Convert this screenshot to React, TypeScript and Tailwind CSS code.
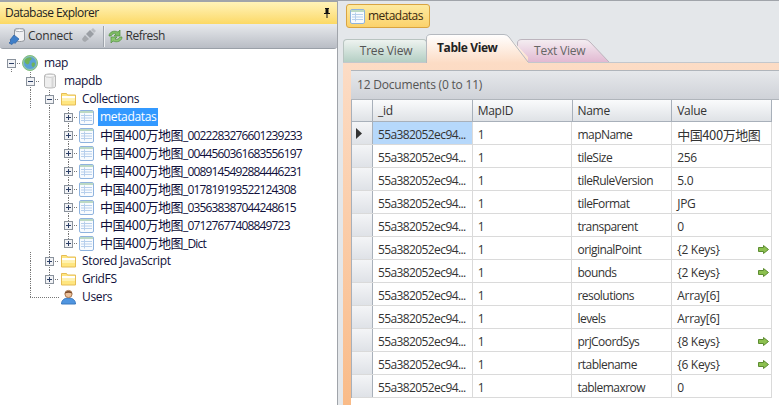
import React from 'react';

const cjk = "font-['Noto_Sans_CJK_SC',sans-serif] text-[13px] tracking-[-0.45px]";

function Guide({ up, down, right, box }: { up?: boolean; down?: boolean; right?: boolean; box?: 'plus' | 'minus' }) {
  return (
    <svg width="19" height="18" className="shrink-0 block">
      {up && <line x1="9.5" y1="0" x2="9.5" y2="9" stroke="#777" strokeDasharray="1 1" />}
      {down && <line x1="9.5" y1="9" x2="9.5" y2="18" stroke="#777" strokeDasharray="1 1" />}
      {right && <line x1="9" y1="9.5" x2="19" y2="9.5" stroke="#777" strokeDasharray="1 1" />}
      {box && (
        <>
          <rect x="5.5" y="5.5" width="8" height="8" fill="#f1f2f5" stroke="#8a929c" />
          <line x1="7" y1="9.5" x2="12" y2="9.5" stroke="#2c3f66" />
          {box === 'plus' && <line x1="9.5" y1="7" x2="9.5" y2="12" stroke="#2c3f66" />}
        </>
      )}
    </svg>
  );
}

function TableIcon() {
  return (
    <svg width="15" height="15" viewBox="0 0 15 15" className="shrink-0">
      <rect x="0.5" y="0.5" width="14" height="14" rx="1.5" fill="#f8fbfe" stroke="#8fb3de" />
      <rect x="1" y="1" width="13" height="2" fill="#bcd9c4" />
      <path d="M2 5.5h11M2 8h11M2 10.5h11M5.5 3.5v9" stroke="#b7cfec" />
    </svg>
  );
}

function FolderIcon() {
  return (
    <svg width="15" height="14" viewBox="0 0 15 14" className="shrink-0">
      <path d="M0.5 13V1.5h5l1 1.5h8v10z" fill="#ffe680" stroke="#e6bd55" />
      <path d="M1 4h13v2.5H1z" fill="#ffffff" />
      <path d="M1 6.5h13V9H1z" fill="#fff2b0" />
    </svg>
  );
}

function GlobeIcon() {
  return (
    <svg width="16" height="16" viewBox="0 0 16 16" className="shrink-0">
      <circle cx="8" cy="8" r="7.5" fill="#5aa0d6" stroke="#86c077" />
      <path d="M2.5 5c2-3 6-3.5 7-2 1 2-2 2-2 4s-2 3-3 2-2.5-2-2-4zM10 8c2-1 3 0 3 1s-1 3-2 3-2-3-1-4z" fill="#6fb35a" />
      <circle cx="8" cy="8" r="6.5" fill="none" stroke="#a9d69b" strokeOpacity="0.7" />
    </svg>
  );
}

function DbIcon() {
  return (
    <svg width="12" height="16" viewBox="0 0 12 16" className="shrink-0">
      <path d="M0.5 2.5C0.5 0.5 11.5 0.5 11.5 2.5V13.5C11.5 15.5 0.5 15.5 0.5 13.5z" fill="#eeeeee" stroke="#b8b8b8" />
      <ellipse cx="6" cy="2.8" rx="5" ry="1.5" fill="#fafafa" stroke="#c8c8c8" />
      <path d="M8.5 5v9" stroke="#d6d6d6" strokeWidth="2" />
    </svg>
  );
}

function UserIcon() {
  return (
    <svg width="15" height="16" viewBox="0 0 15 16" className="shrink-0">
      <path d="M0.5 15c0-4 3-6 7-6s7 2 7 6z" fill="#4f95e0" stroke="#3a78bf" />
      <circle cx="7.5" cy="5" r="3.6" fill="#eec29c" stroke="#a7764f" />
      <path d="M3.8 4.5C4 1 11 1 11.2 4.5 9 3.5 6 3.5 3.8 4.5z" fill="#7a4a28" />
    </svg>
  );
}

function ConnectIcon() {
  return (
    <svg width="18" height="18" viewBox="0 0 18 18" className="shrink-0">
      <path d="M6.5 3C6.5 1 16.5 1 16.5 3V13C16.5 15 6.5 15 6.5 13z" fill="#f0f0f2" stroke="#8f949b" />
      <ellipse cx="11.5" cy="3.2" rx="4.6" ry="1.4" fill="#fff" stroke="#a5a9b0" />
      <path d="M1 16l2-2-1-1 4-5 5 4-4 4.5-1-1-2 2z" fill="#3f7fc9" stroke="#2b5f9f" strokeWidth="0.7" />
    </svg>
  );
}

function PlugIcon() {
  return (
    <svg width="17" height="17" viewBox="0 0 17 17" className="shrink-0">
      <path d="M1 16l3-3-1-2 3-4 4 4-4 3-2-1-3 3z" fill="#a5a8ad" />
      <path d="M7 6l4-4 4 4-4 4z" fill="#9a9ea4" />
      <path d="M12 2l2-2 3 3-2 2z" fill="#b9bcc1" />
    </svg>
  );
}

function RefreshIcon() {
  return (
    <svg width="17" height="17" viewBox="0 0 17 17" className="shrink-0">
      <path d="M2 8c0-4 5-6 9-4l2-2v6H7l2-2c-2-1-4 0-5 2z" fill="#7dbb63" stroke="#4f8f3d" strokeWidth="0.7" />
      <path d="M15 9c0 4-5 6-9 4l-2 2V9h6l-2 2c2 1 4 0 5-2z" fill="#8cc671" stroke="#4f8f3d" strokeWidth="0.7" />
    </svg>
  );
}

function ArrowIcon() {
  return (
    <svg width="11" height="9" viewBox="0 0 11 9" className="shrink-0">
      <path d="M0.5 2.5h5v-2l5 4-5 4v-2h-5z" fill="#8cc04f" stroke="#5c8c30" />
    </svg>
  );
}

function Collection({ name, last }: { name: string; last?: boolean }) {
  const i = name.indexOf('_');
  return (
    <div className="flex h-[18px] items-center pl-[2px]">
      <div className="w-[19px] shrink-0" />
      <div className="w-[19px] shrink-0" />
      <Guide up down />
      <Guide up down={!last} right box="plus" />
      <span className="ml-[1px]"><TableIcon /></span>
      <span className="ml-[6px] whitespace-nowrap text-[#10103a]">
        <span className={cjk}>{name.slice(0, i)}</span>
        <span className="tracking-[-0.85px]">{name.slice(i)}</span>
      </span>
    </div>
  );
}

const collections = [
  '中国400万地图_0022283276601239233',
  '中国400万地图_0044560361683556197',
  '中国400万地图_0089145492884446231',
  '中国400万地图_017819193522124308',
  '中国400万地图_035638387044248615',
  '中国400万地图_07127677408849723',
  '中国400万地图_Dict',
];

const rows: [string, string, boolean?][] = [
  ['mapName', '中国400万地图'],
  ['tileSize', '256'],
  ['tileRuleVersion', '5.0'],
  ['tileFormat', 'JPG'],
  ['transparent', '0'],
  ['originalPoint', '{2 Keys}', true],
  ['bounds', '{2 Keys}', true],
  ['resolutions', 'Array[6]'],
  ['levels', 'Array[6]'],
  ['prjCoordSys', '{8 Keys}', true],
  ['rtablename', '{6 Keys}', true],
  ['tablemaxrow', '0'],
];

function HeaderCell({ w, label }: { w: string; label: string }) {
  return (
    <div className={`${w} h-full flex items-center pl-[5px] border-r border-[#a8b0ba] bg-gradient-to-b from-[#fafbfc] to-[#dfe2e6] tracking-[-0.3px]`}>
      {label}
    </div>
  );
}

export default function App() {
  return (
    <div className="flex h-[405px] w-[779px] overflow-hidden bg-[#e4e7ea] font-['Open_Sans',sans-serif] text-[12px] text-[#1a1a3a]">
      {/* Left panel */}
      <div className="flex h-full w-[338px] shrink-0 flex-col border-t-2 border-r border-[#a0a4aa] bg-white">
        <div className="flex h-[22px] items-center justify-between bg-gradient-to-b from-[#fff3b8] to-[#fcd964] pl-[5px] pr-[6px] text-[#222] tracking-[-0.55px]">
          <span>Database Explorer</span>
          <svg width="8" height="10" viewBox="0 0 8 10"><path d="M2 0h4v1H5.5v4H7v1H4.5v4h-1V6H1V5h1.5V1H2z" fill="#111" /></svg>
        </div>
        <div className="flex h-[25px] items-center rounded-b-[3px] border-b border-[#9aa0a8] bg-gradient-to-b from-[#e8eaed] to-[#b9bdc5] pl-[8px] text-[#333] tracking-[-0.25px]">
          <ConnectIcon />
          <span className="ml-[2px]">Connect</span>
          <span className="ml-[6px]"><PlugIcon /></span>
          <div className="ml-[7px] h-[21px] w-[2px] border-l border-[#9ea3ab] bg-[#eceef0]" />
          <span className="ml-[2px]"><RefreshIcon /></span>
          <span className="ml-[2px] tracking-[-0.5px]">Refresh</span>
        </div>
        <div className="pt-[5px] tracking-[-0.35px] text-[#10103a]">
          <div className="flex h-[18px] items-center pl-[2px]">
            <Guide down right box="minus" />
            <span className="ml-[1px]"><GlobeIcon /></span>
            <span className="ml-[6px]">map</span>
          </div>
          <div className="flex h-[18px] items-center pl-[2px]">
            <div className="w-[19px] shrink-0" />
            <Guide up down right box="minus" />
            <span className="ml-[4px]"><DbIcon /></span>
            <span className="ml-[8px]">mapdb</span>
          </div>
          <div className="flex h-[18px] items-center pl-[2px]">
            <div className="w-[19px] shrink-0" />
            <Guide up down />
            <Guide up down right box="minus" />
            <span className="ml-[2px]"><FolderIcon /></span>
            <span className="ml-[6px]">Collections</span>
          </div>
          <div className="flex h-[18px] items-center pl-[2px]">
            <div className="w-[19px] shrink-0" />
            <div className="w-[19px] shrink-0" />
            <Guide up down />
            <Guide up down right box="plus" />
            <span className="ml-[1px]"><TableIcon /></span>
            <span className="ml-[4px] bg-[#3399ff] px-[2px] leading-[18px] text-white">metadatas</span>
          </div>
          {collections.map((name, i) => (
            <Collection key={name} name={name} last={i === collections.length - 1} />
          ))}
          <div className="flex h-[18px] items-center pl-[2px]">
            <div className="w-[19px] shrink-0" />
            <Guide up down />
            <Guide up down right box="plus" />
            <span className="ml-[2px]"><FolderIcon /></span>
            <span className="ml-[6px]">Stored JavaScript</span>
          </div>
          <div className="flex h-[18px] items-center pl-[2px]">
            <div className="w-[19px] shrink-0" />
            <Guide up down />
            <Guide up down right box="plus" />
            <span className="ml-[2px]"><FolderIcon /></span>
            <span className="ml-[6px]">GridFS</span>
          </div>
          <div className="flex h-[18px] items-center pl-[2px]">
            <div className="w-[19px] shrink-0" />
            <Guide up right />
            <svg width="19" height="18" className="block shrink-0"><line x1="0" y1="9.5" x2="19" y2="9.5" stroke="#777" strokeDasharray="1 1" /></svg>
            <span className="ml-[2px]"><UserIcon /></span>
            <span className="ml-[6px]">Users</span>
          </div>
        </div>
      </div>

      {/* Right panel */}
      <div className="flex h-full min-w-0 flex-1 flex-col border-t border-[#a0a4aa] pl-[5px]">
        <div className="ml-[3px] mt-[3px] flex h-[24px] w-[84px] items-center gap-[3px] rounded-[3px] border border-[#d9a441] bg-gradient-to-b from-[#fdeaa0] to-[#fbd26b] pl-[3px] text-[#3a2a10]">
          <TableIcon />
          <span className="tracking-[-0.5px]">metadatas</span>
        </div>
        <div className="relative mt-[6px] h-[28px] shrink-0">
          <div className="absolute left-0 top-[5px] flex h-[23px] w-[84px] items-center justify-center rounded-t-[4px] border border-b-0 border-[#b8c4c0] bg-gradient-to-b from-[#eef3f0] to-[#b4cfc4] pl-[2px] text-[#555] tracking-[-0.2px]">Tree View</div>
          <div className="absolute left-[174px] top-[5px] h-[23px] w-[93px]">
            <svg width="93" height="23" className="absolute inset-0">
              <defs>
                <linearGradient id="pink" x1="0" y1="0" x2="0" y2="1"><stop offset="0" stopColor="#f4eef2" /><stop offset="1" stopColor="#e2b9d2" /></linearGradient>
              </defs>
              <path d="M0.5 23V4Q0.5 0.5 5 0.5H68Q71 0.5 73 3L92 23" fill="url(#pink)" stroke="#bcb4bd" />
            </svg>
            <span className="absolute left-[17px] top-[3px] text-[#666] tracking-[-0.2px]">Text View</span>
          </div>
          <div className="absolute left-[83px] top-0 h-[28px] w-[103px]">
            <svg width="103" height="29" className="absolute inset-0">
              <defs>
                <linearGradient id="peach" x1="0" y1="0" x2="0" y2="1"><stop offset="0" stopColor="#ffffff" /><stop offset="1" stopColor="#fcdcc5" /></linearGradient>
              </defs>
              <path d="M0.5 29V4Q0.5 0.5 5 0.5H78Q81 0.5 83 3L102 23V29z" fill="url(#peach)" />
              <path d="M0.5 29V4Q0.5 0.5 5 0.5H78Q81 0.5 83 3L102 28" fill="none" stroke="#b5b9bf" />
            </svg>
            <span className="absolute left-[11px] top-[5px] font-bold text-[#222] tracking-[-0.4px]">Table View</span>
          </div>
        </div>
        <div className="flex min-h-0 flex-1 flex-col border-t border-[#c3c7cc] bg-gradient-to-b from-[#fcdcc5] to-[#f9bb88] pl-[8px] pt-[7px]">
          <div className="flex min-h-0 flex-1 flex-col rounded-tl-[2px] bg-white">
            <div className="flex h-[30px] shrink-0 items-center border-b border-t border-[#b0b5bb] bg-gradient-to-b from-[#e6e8eb] to-[#cfd2d8] pl-[6px] text-[#555] tracking-[-0.2px]">
              12 Documents (0 to 11)
            </div>
            <div className="w-[421px] border-l border-[#a8b0ba] text-[#333]">
              <div className="flex h-[22px] border-b border-[#a8b0ba]">
                <HeaderCell w="w-[21px]" label="" />
                <HeaderCell w="w-[100px]" label="_id" />
                <HeaderCell w="w-[100px]" label="MapID" />
                <HeaderCell w="w-[100px]" label="Name" />
                <HeaderCell w="w-[100px]" label="Value" />
              </div>
              {rows.map(([name, value, arrow], i) => (
                <div key={name} className="flex h-[23px] border-b border-[#dadada]">
                  <div className="flex w-[21px] items-center border-r border-[#a8b0ba] bg-gradient-to-b from-[#f4f5f7] to-[#dfe2e7] pl-[3px]">
                    {i === 0 && <svg width="8" height="11" viewBox="0 0 8 11"><path d="M1 0l6 5.5-6 5.5z" fill="#333" /></svg>}
                  </div>
                  <div className={`flex w-[100px] items-center border-r border-[#dadada] pl-[5px] pt-[3px] tracking-[-0.6px] ${i === 0 ? 'bg-[#b6d8fb]' : ''}`}>55a382052ec94...</div>
                  <div className="flex w-[100px] items-center border-r border-[#dadada] pl-[5px] pt-[3px]">1</div>
                  <div className="flex w-[100px] items-center border-r border-[#dadada] pl-[5px] pt-[3px] tracking-[-0.55px]">{name}</div>
                  <div className="flex w-[100px] items-center justify-between border-r border-[#dadada] pl-[5px] pr-[2px] pt-[3px] tracking-[-0.3px]">
                    <span className={i === 0 ? cjk : ''}>{value}</span>
                    {arrow && <ArrowIcon />}
                  </div>
                </div>
              ))}
            </div>
          </div>
        </div>
      </div>
    </div>
  );
}
